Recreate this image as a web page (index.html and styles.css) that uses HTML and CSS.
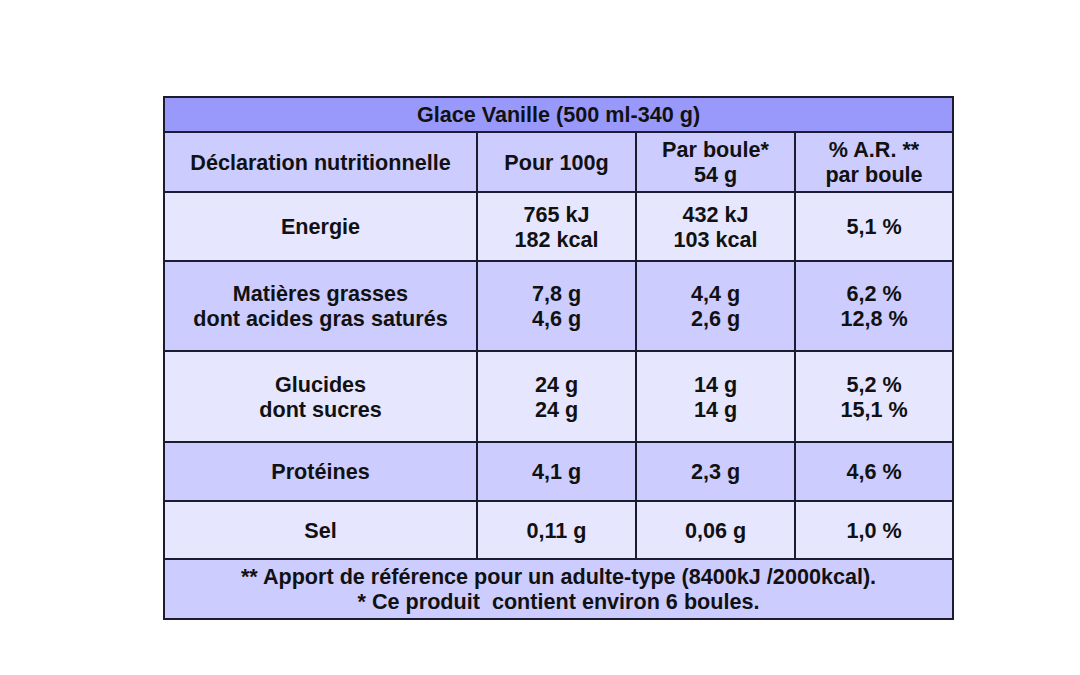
FILE: index.html
```html
<!DOCTYPE html>
<html lang="fr">
<head>
<meta charset="utf-8">
<title>Glace Vanille</title>
<link rel="stylesheet" href="styles.css">
</head>
<body>
<table class="nut">
  <colgroup>
    <col class="c1"><col class="c2"><col class="c3"><col class="c4">
  </colgroup>
  <tr class="r-title"><td colspan="4" class="title">Glace Vanille (500 ml-340 g)</td></tr>
  <tr class="r-head dark"><td>Déclaration nutritionnelle</td><td>Pour 100g</td><td>Par boule*<br>54 g</td><td>% A.R. **<br>par boule</td></tr>
  <tr class="r-energy light"><td>Energie</td><td>765 kJ<br>182 kcal</td><td>432 kJ<br>103 kcal</td><td>5,1 %</td></tr>
  <tr class="r-fat dark"><td>Matières grasses<br>dont acides gras saturés</td><td>7,8 g<br>4,6 g</td><td>4,4 g<br>2,6 g</td><td>6,2 %<br>12,8 %</td></tr>
  <tr class="r-carb light"><td>Glucides<br>dont sucres</td><td>24 g<br>24 g</td><td>14 g<br>14 g</td><td>5,2 %<br>15,1 %</td></tr>
  <tr class="r-prot dark"><td>Protéines</td><td>4,1 g</td><td>2,3 g</td><td>4,6 %</td></tr>
  <tr class="r-salt light"><td>Sel</td><td>0,11 g</td><td>0,06 g</td><td>1,0 %</td></tr>
  <tr class="r-foot dark"><td colspan="4">** Apport de référence pour un adulte-type (8400kJ /2000kcal).<br>* Ce produit&nbsp; contient environ 6 boules.</td></tr>
</table>
</body>
</html>
```
FILE: styles.css
```css
html, body {
  margin: 0;
  padding: 0;
  background: #ffffff;
}
body {
  padding-top: 96px;
  padding-left: 163px;
  font-family: "Liberation Sans", Arial, sans-serif;
}
.nut {
  border-collapse: collapse;
  table-layout: fixed;
  width: 789px;
  font-weight: bold;
  font-size: 21.6px;
  line-height: 25px;
  color: #111111;
}
.nut td {
  border: 2px solid #1c1c30;
  text-align: center;
  vertical-align: middle;
  padding: 0;
  white-space: nowrap;
}
.c1 { width: 313px; }
.c2 { width: 159px; }
.c3 { width: 159px; }
.c4 { width: 158px; }
.title { background: #9999fb; }
.dark td { background: #ccccff; }
.light td { background: #e6e6ff; }
.r-title { height: 35px; }
.r-head { height: 60px; }
.r-energy { height: 69px; }
.r-fat { height: 90px; }
.r-carb { height: 91px; }
.r-prot { height: 59px; }
.r-salt { height: 58px; }
.r-foot { height: 60px; }
```
